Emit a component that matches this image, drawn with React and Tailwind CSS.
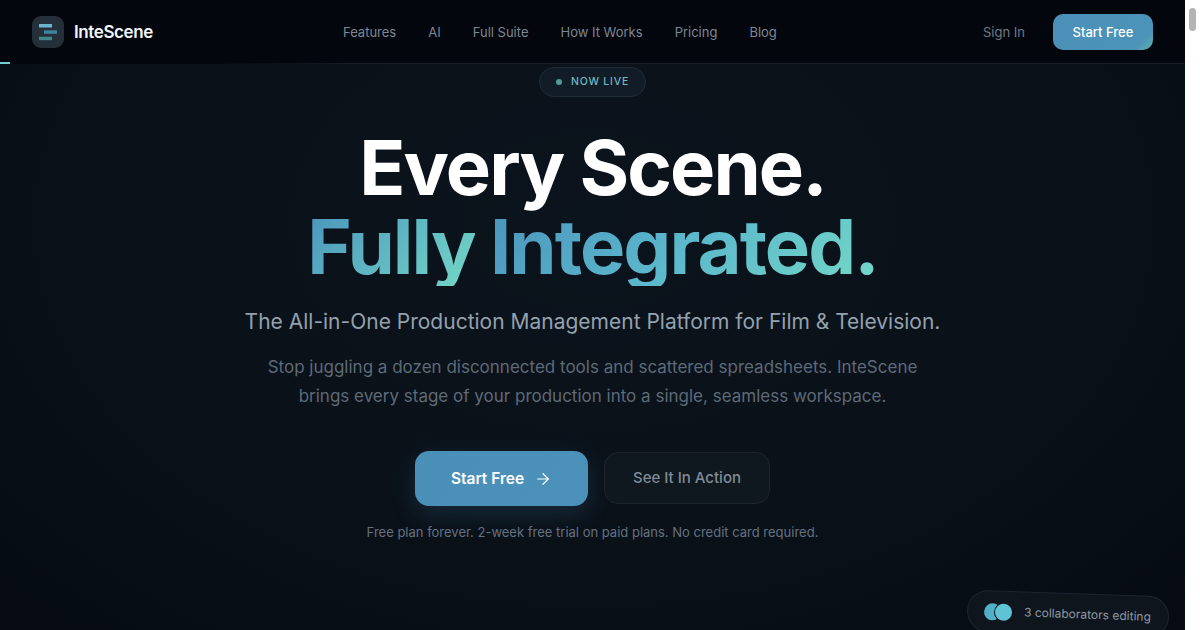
import React from "react";
import { ArrowRight } from "lucide-react";

const links = ["Features", "AI", "Full Suite", "How It Works", "Pricing", "Blog"];

function Logo() {
  return (
    <svg width="32" height="32" viewBox="0 0 32 32" aria-hidden="true" className="block">
      <rect width="32" height="32" rx="9" fill="#242f3a" />
      <rect x="7" y="8" width="13" height="3.5" fill="#6cb5cf" />
      <rect x="12" y="14.3" width="13" height="3.5" fill="#3f8398" />
      <rect x="7" y="20.7" width="13" height="3.5" fill="#43868a" />
    </svg>
  );
}

export default function App() {
  return (
    <div className="flex h-[630px] w-[1200px] overflow-hidden font-['Inter',sans-serif]">
      <main className="relative h-full flex-1 overflow-hidden bg-[radial-gradient(ellipse_at_50%_35%,#0b131c_0%,#0a1119_55%,#060b13_100%)]">
        <header className="relative flex h-16 items-center justify-between bg-[#03060d] pl-8 pr-8">
          <div className="flex items-center gap-2.5">
            <Logo />
            <span className="pt-[2px] text-[17px] font-semibold tracking-[-0.4px] text-[#f1f5f9]">InteScene</span>
          </div>
          <nav className="absolute left-[343px] flex items-center gap-8 pt-[2px]">
            {links.map((l) => (
              <a key={l} className="text-[13px] text-[#7d8894]">{l}</a>
            ))}
          </nav>
          <div className="flex items-center gap-7">
            <a className="pt-[2px] text-[13px] text-[#6f7a86]">Sign In</a>
            <button className="h-9 w-[100px] rounded-[10px] bg-[linear-gradient(135deg,#4a90b8,#4c93b8_85%,#5fb0b0)] pt-[2px] text-[13px] font-medium text-white">Start Free</button>
          </div>
          <div className="absolute bottom-0 left-0 h-px w-full bg-[linear-gradient(90deg,transparent_18%,#171e26_30%,#171e26_100%)]" />
          <div className="absolute bottom-0 left-0 h-[2px] w-[10px] bg-[#6fcfcf]" />
        </header>

        <section className="flex flex-col items-center pt-[3px]">
          <div className="flex h-[30px] w-[107px] items-center justify-center gap-[9px] rounded-full border border-[#1f2c36] bg-[#121c26]">
            <span className="h-[6px] w-[6px] rounded-full bg-[#4f9c97]" />
            <span className="text-[10.5px] font-medium tracking-[0.8px] text-[#6fb7c4]">NOW LIVE</span>
          </div>
          <h1 className="mt-[31px] text-center text-[76px] font-bold leading-[79px] tracking-[-1.9px]">
            <span className="block text-white">Every Scene.</span>
            <span className="flex justify-center gap-[15px]">
              <span className="bg-[linear-gradient(135deg,#4a94bd,#74d8c6)] bg-clip-text text-transparent">Fully</span>
              <span className="bg-[linear-gradient(135deg,#4a94bd,#5cb8cc_50%,#74d8c6)] bg-clip-text text-transparent">Integrated.</span>
            </span>
          </h1>
          <p className="mt-[21px] text-[21px] leading-[30px] text-[#94a1ae]">The All-in-One Production Management Platform for Film &amp; Television.</p>
          <p className="mt-[16px] w-[680px] text-center text-[17px] leading-[29px] text-[#5e6a77]">Stop juggling a dozen disconnected tools and scattered spreadsheets. InteScene brings every stage of your production into a single, seamless workspace.</p>
          <div className="mt-[40px] flex items-start gap-4">
            <button className="flex h-[55px] w-[173px] items-center justify-center gap-[10px] rounded-[14px] bg-[linear-gradient(135deg,#4a8fb8,#4b91b9)] text-[15.5px] font-semibold text-white shadow-[0_8px_24px_rgba(74,143,184,0.2)]">
              Start Free <ArrowRight size={18} strokeWidth={1.6} />
            </button>
            <button className="mt-px h-[52px] w-[166px] rounded-[14px] border border-[#1c252e] bg-[#10181f] text-[15px] font-medium text-[#7f8b97]">See It In Action</button>
          </div>
          <p className="mt-[17px] text-[13px] text-[#657180]">Free plan forever. 2-week free trial on paid plans. No credit card required.</p>
        </section>

        <div className="absolute left-[967px] top-[593px] flex h-[42px] w-[202px] rotate-[2deg] items-center gap-3 rounded-full border border-[#1c2630] bg-[#0e151d] pl-[16px]">
          <div className="flex">
            <span className="h-[17px] w-[17px] rounded-full bg-[#4fb0c8]" />
            <span className="-ml-[6px] h-[17px] w-[17px] rounded-full bg-[#5fc3d6] ring-1 ring-[#0e151d]" />
          </div>
          <span className="text-[12px] text-[#8b97a3]">3 collaborators editing</span>
        </div>
      </main>
      <aside className="h-full w-[15px] shrink-0 bg-white pl-[4px] pt-2">
        <div className="h-[23px] w-[7px] rounded-full bg-[#b4b4b4]" />
      </aside>
    </div>
  );
}
